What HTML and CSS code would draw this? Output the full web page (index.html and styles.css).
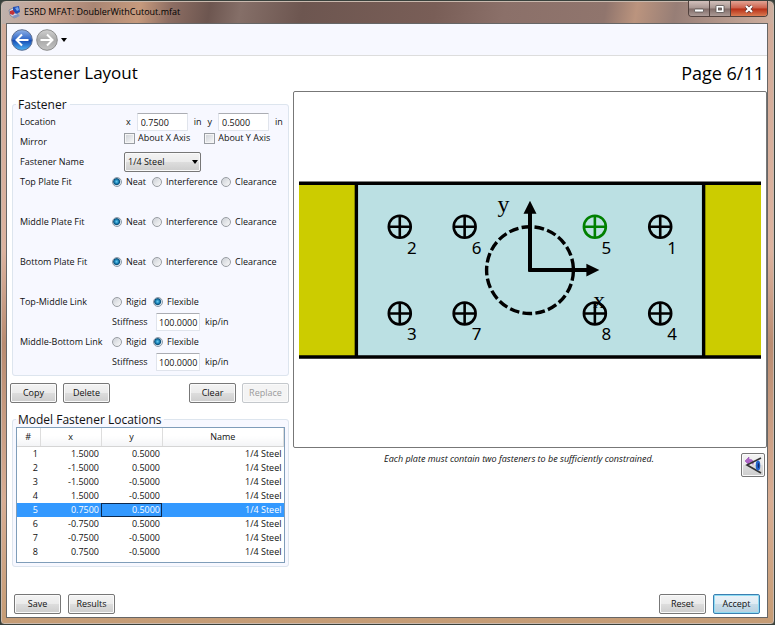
FILE: index.html
```html
<!DOCTYPE html>
<html lang="en">
<head>
<meta charset="utf-8">
<title>ESRD MFAT: DoublerWithCutout.mfat</title>
<link rel="stylesheet" href="styles.css">
</head>
<body>
<div class="window">
  <header class="titlebar">
    <svg class="app-icon" viewBox="0 0 13 13" aria-hidden="true">
      <path d="M1 4l4-2 4 2 1 6-4 2-4-3z" fill="#d9dde8" stroke="#66708a" stroke-width=".7"/>
      <path d="M5 1l6-1 1 6-4 2-3-3z" fill="#234eb4"/>
      <path d="M7 2l3-1 1 3-2 1z" fill="#72a5ee"/>
      <path d="M2 5l3-1 2 3-2 2-3-1z" fill="#c23338"/>
      <path d="M4 10l6-2 2 2-5 2z" fill="#8095c5"/>
    </svg>
    <span class="title">ESRD MFAT: DoublerWithCutout.mfat</span>
    <div class="caption-buttons">
      <button class="caption" aria-label="Minimize"><svg viewBox="0 0 12 10"><rect x="1.500" y="5" width="9" height="3" rx="1" fill="#fff" stroke="#55504f" stroke-width=".8"/></svg></button>
      <button class="caption" aria-label="Maximize"><svg viewBox="0 0 12 10"><rect x="2" y="1.500" width="8" height="7" rx=".5" fill="#fff" stroke="#55504f" stroke-width=".8"/><rect x="4.500" y="4" width="3" height="2" fill="#887370" stroke="#55504f" stroke-width=".8"/></svg></button>
      <button class="caption close" aria-label="Close"><svg viewBox="0 0 12 10"><path d="M3 2l6 6M9 2L3 8" stroke="#5b302c" stroke-width="3.600"/><path d="M3 2l6 6M9 2L3 8" stroke="#fff" stroke-width="2.200"/></svg></button>
    </div>
  </header>

  <div class="client">
    <nav class="toolbar" aria-label="Navigation">
      <button class="nav" aria-label="Back">
        <svg viewBox="0 0 22 22">
          <defs>
            <linearGradient id="blue" x2="0" y2="1"><stop offset="0" stop-color="#8fb1e6"/><stop offset=".48" stop-color="#2f66c8"/><stop offset=".52" stop-color="#164bb4"/><stop offset="1" stop-color="#4fb4f4"/></linearGradient>
            <linearGradient id="grey" x2="0" y2="1"><stop offset="0" stop-color="#d0d0d0"/><stop offset=".5" stop-color="#a9a9a9"/><stop offset="1" stop-color="#c4c4c4"/></linearGradient>
          </defs>
          <circle cx="11" cy="11" r="10.300" fill="url(#blue)" stroke="#5d6f93"/>
          <path d="M17.500 11H5.500M11 5.500L5.500 11l5.500 5.500" fill="none" stroke="#fff" stroke-width="2"/>
        </svg>
      </button>
      <button class="nav" aria-label="Forward">
        <svg viewBox="0 0 22 22">
          <circle cx="11" cy="11" r="10.300" fill="url(#grey)" stroke="#8d8d8d"/>
          <path d="M4.500 11h12M11 5.500l5.500 5.500-5.500 5.500" fill="none" stroke="#fff" stroke-width="2"/>
        </svg>
      </button>
      <button class="history" aria-label="Recent pages"><svg viewBox="0 0 6 4"><path d="M0 0h6L3 4z"/></svg></button>
    </nav>

    <div class="heading">
      <h1>Fastener Layout</h1>
      <span class="page">Page 6/11</span>
    </div>

    <main class="content">
      <section class="left">
        <fieldset class="group">
          <legend>Fastener</legend>
          <div class="row">
            <span class="name">Location</span>
            <div class="location">
              <label for="loc-x">x</label><input id="loc-x" class="text" value="0.7500"><span>in</span>
              <label for="loc-y">y</label><input id="loc-y" class="text" value="0.5000"><span>in</span>
            </div>
          </div>
          <div class="row">
            <span class="name">Mirror</span>
            <div class="mirror">
              <label><input type="checkbox">About X Axis</label>
              <label><input type="checkbox">About Y Axis</label>
            </div>
          </div>
          <div class="row">
            <label class="name" for="fastener">Fastener Name</label>
            <div class="picker">
              <select id="fastener"><option>1/4 Steel</option></select>
              <svg viewBox="0 0 6 4" aria-hidden="true"><path d="M0 0h6L3 4z"/></svg>
            </div>
          </div>
          <div class="row fit" role="radiogroup" aria-label="Top Plate Fit">
            <span class="name">Top Plate Fit</span>
            <label><input type="radio" name="top" checked>Neat</label>
            <label><input type="radio" name="top">Interference</label>
            <label><input type="radio" name="top">Clearance</label>
          </div>
          <div class="row fit" role="radiogroup" aria-label="Middle Plate Fit">
            <span class="name">Middle Plate Fit</span>
            <label><input type="radio" name="middle" checked>Neat</label>
            <label><input type="radio" name="middle">Interference</label>
            <label><input type="radio" name="middle">Clearance</label>
          </div>
          <div class="row fit" role="radiogroup" aria-label="Bottom Plate Fit">
            <span class="name">Bottom Plate Fit</span>
            <label><input type="radio" name="bottom" checked>Neat</label>
            <label><input type="radio" name="bottom">Interference</label>
            <label><input type="radio" name="bottom">Clearance</label>
          </div>
          <div class="row link" role="radiogroup" aria-label="Top-Middle Link">
            <span class="name">Top-Middle Link</span>
            <label><input type="radio" name="tm">Rigid</label>
            <label><input type="radio" name="tm" checked>Flexible</label>
          </div>
          <div class="row stiffness">
            <label for="tm-stiff">Stiffness</label><input id="tm-stiff" class="text" value="100.0000"><span>kip/in</span>
          </div>
          <div class="row link" role="radiogroup" aria-label="Middle-Bottom Link">
            <span class="name">Middle-Bottom Link</span>
            <label><input type="radio" name="mb">Rigid</label>
            <label><input type="radio" name="mb" checked>Flexible</label>
          </div>
          <div class="row stiffness">
            <label for="mb-stiff">Stiffness</label><input id="mb-stiff" class="text" value="100.0000"><span>kip/in</span>
          </div>
        </fieldset>

        <div class="actions">
          <button class="btn">Copy</button>
          <button class="btn">Delete</button>
          <button class="btn push">Clear</button>
          <button class="btn" disabled>Replace</button>
        </div>

        <fieldset class="group locations">
          <legend>Model Fastener Locations</legend>
          <div class="grid-box">
            <table>
              <colgroup><col class="c-num"><col class="c-coord"><col class="c-coord"><col></colgroup>
              <thead><tr><th>#</th><th>x</th><th>y</th><th>Name</th></tr></thead>
              <tbody>
                <tr><td>1</td><td>1.5000</td><td>0.5000</td><td>1/4 Steel</td></tr>
                <tr><td>2</td><td>-1.5000</td><td>0.5000</td><td>1/4 Steel</td></tr>
                <tr><td>3</td><td>-1.5000</td><td>-0.5000</td><td>1/4 Steel</td></tr>
                <tr><td>4</td><td>1.5000</td><td>-0.5000</td><td>1/4 Steel</td></tr>
                <tr class="selected"><td>5</td><td>0.7500</td><td class="current">0.5000</td><td>1/4 Steel</td></tr>
                <tr><td>6</td><td>-0.7500</td><td>0.5000</td><td>1/4 Steel</td></tr>
                <tr><td>7</td><td>-0.7500</td><td>-0.5000</td><td>1/4 Steel</td></tr>
                <tr><td>8</td><td>0.7500</td><td>-0.5000</td><td>1/4 Steel</td></tr>
              </tbody>
            </table>
          </div>
        </fieldset>
      </section>

      <section class="right">
        <div class="canvas">
          <svg viewBox="0 0 473 356" role="img" aria-label="Fastener layout diagram">
            <defs>
              <g id="bolt" fill="none" stroke-width="2.600"><circle r="11"/><path d="M-11 0H11M0-11V11"/></g>
            </defs>
            <rect x="5" y="91" width="463" height="175" fill="#cccc00"/>
            <rect x="63" y="91" width="347" height="175" fill="#bbe0e3"/>
            <path d="M5 91.500H468M5 265.500H468M62.500 91V266M410.500 91V266" stroke="#000" stroke-width="3.400"/>
            <circle cx="236.500" cy="178.500" r="43.500" fill="none" stroke="#000" stroke-width="3.400" stroke-dasharray="9.700 3.315" stroke-dashoffset="-1"/>
            <path d="M236.500 180V119M235 178.500H295" stroke="#000" stroke-width="4"/>
            <path d="M236.500 109l6.500 13h-13zM306 178.500l-13 6.500v-13z"/>
            <g class="axis"><text x="204" y="120">y</text><text x="300" y="216">x</text></g>
            <g stroke="#000">
              <use href="#bolt" x="106" y="135"/><use href="#bolt" x="171" y="135"/><use href="#bolt" x="367" y="135"/>
              <use href="#bolt" x="106" y="222"/><use href="#bolt" x="171" y="222"/><use href="#bolt" x="301.500" y="222"/><use href="#bolt" x="367" y="222"/>
              <use href="#bolt" x="301.500" y="135" stroke="#008000"/>
            </g>
            <g class="num">
              <text x="118" y="162">2</text><text x="183" y="162">6</text><text x="313" y="162">5</text><text x="379" y="162">1</text>
              <text x="118" y="249">3</text><text x="183" y="249">7</text><text x="313" y="249">8</text><text x="379" y="249">4</text>
            </g>
          </svg>
        </div>
        <div class="below">
          <p>Each plate must contain two fasteners to be sufficiently constrained.</p>
          <button class="btn view" aria-label="Reset view">
            <svg viewBox="0 0 18 18">
              <path d="M1 5l4-4v2.500c4-.5 5 2 4 5C8 6.500 7 6 5 6.500V9z" fill="#ae63c7" stroke="#8d43a8" stroke-width=".5"/>
              <path d="M17 2L3 9l14 8" fill="none" stroke="#333" stroke-width="1.600"/>
              <ellipse cx="14" cy="9.500" rx="2.300" ry="5" fill="#2464c9"/><ellipse cx="14.500" cy="9.500" rx=".8" ry="2.500" fill="#102a6c"/>
            </svg>
          </button>
        </div>
      </section>
    </main>

    <footer class="footer">
      <button class="btn">Save</button>
      <button class="btn">Results</button>
      <button class="btn push">Reset</button>
      <button class="btn default">Accept</button>
    </footer>
  </div>
</div>
</body>
</html>
```
FILE: styles.css
```css
* { box-sizing: border-box; }

body {
  margin: 0;
  background: #39413c;
  color: #111;
  font: 9px/14px "Open Sans", "Noto Sans", sans-serif;
}

button, input, select { font: inherit; color: inherit; margin: 0; }
button svg { display: block; }

.window {
  display: flex;
  flex-direction: column;
  min-height: 100vh;
  padding: 0 6px 6px 5px;
  border: 1px solid #39413c;
  border-radius: 6px 6px 4px 4px;
  background:
    linear-gradient(100deg, #bfb3ae 0, #c39d8b 7%, #a98674 12%, #c69a7d 18%, #8d6e63 22%, #6d5650 27%, #856f68 31%, #6d5650 39%, #795e57 56%, #8b7069 65%, #90756d 78%, #bb947e 82%, #977e76 87%, #cfaf9f 100%) 0 0 / 100% 23px no-repeat,
    linear-gradient(#d0aa98 0, #dcb39f 40%, #b98c71 55%, #d8ad93 80%, #c59c75 100%);
  box-shadow: inset 0 0 0 1px #c9b9ae;
}

.titlebar {
  display: flex;
  align-items: center;
  height: 22px;
  padding-left: 2px;
  gap: 3px;
}

.app-icon { width: 13px; height: 13px; }
.title { color: #000; }

.caption-buttons {
  display: flex;
  align-self: flex-start;
  margin-left: auto;
  border: 1px solid #51413d;
  border-top: 0;
  border-radius: 0 0 4px 4px;
  overflow: hidden;
}

.caption {
  display: grid;
  place-items: center;
  width: 21px;
  height: 15px;
  padding: 0;
  border: 0;
  border-right: 1px solid #51413d;
  background: linear-gradient(#d2c0bb, #a89691 48%, #806c68 52%, #ab9a96);
}

.caption svg { width: 12px; height: 10px; }
.caption.close { width: 36px; border: 0; background: linear-gradient(#e2a394, #cd604a 48%, #b82e16 52%, #d97a52); }

.client {
  display: flex;
  flex: 1;
  flex-direction: column;
  border: 1px solid #666;
  background: #fff;
}

.toolbar {
  display: flex;
  align-items: center;
  gap: 3px;
  height: 32px;
  padding-left: 4px;
  border-bottom: 1px solid #ddd;
  background: #f7f8ff;
}

.nav { width: 22px; height: 22px; padding: 0; border: 0; background: none; }
.history { padding: 0; border: 0; background: none; }
.history svg { width: 6px; height: 4px; }

.heading {
  display: flex;
  justify-content: space-between;
  height: 35px;
  padding: 5px 3px 0 4px;
  color: #000;
  font-size: 17px;
  line-height: 24px;
}

.heading h1 { margin: 0; font: inherit; }
.page { font-size: 18px; }

.content { display: flex; flex: 1; gap: 4px; }
.left { flex: 0 0 282px; padding: 6px 0 0 5px; }

.group {
  min-width: 0;
  margin: 0;
  padding: 0 4px 3px 7px;
  border: 1px solid #dde5ee;
  border-radius: 3px;
  background: #f7f8ff;
}

.group legend {
  margin-left: -4px;
  padding: 0 3px 0 2px;
  color: #111;
  font-size: 12px;
  line-height: 15px;
}

.row { display: flex; height: 20px; align-items: center; white-space: nowrap; }
.name { flex: 0 0 92px; }
.row.fit { height: 40px; align-items: flex-start; }
.row label, .row.fit .name { line-height: 20px; }
.fit label, .link label, .mirror label { display: flex; align-items: center; }
.fit label { gap: 4px; flex: 0 0 40px; }
.fit label:nth-of-type(2) { flex-basis: 69px; }
.link label { gap: 4px; flex: 0 0 41px; }

.location { display: flex; flex: 1; align-items: center; gap: 6px; padding-left: 14px; }
.mirror { display: flex; gap: 14px; padding-left: 12px; align-self: flex-start; }
.mirror .mirror label, .mirror label { gap: 3px; line-height: 12px; }

.text {
  height: 18px;
  width: 51px;
  padding: 0 3px;
  border: 1px solid #e0e4ec;
  border-top-color: #abadb3;
  border-radius: 1px;
  background: #fff;
}

.stiffness { padding-left: 92px; }
.stiffness label { flex: 0 0 44px; }
.stiffness .text { width: 44px; padding: 0 0 0 2px; margin-right: 5px; }

input[type="radio"], input[type="checkbox"] {
  appearance: none;
  flex: none;
  width: 10px;
  height: 10px;
  border: 1px solid #999da3;
  background: linear-gradient(135deg, #ccd0d6, #fafafa);
}

input[type="checkbox"] { width: 11px; height: 11px; box-shadow: inset 0 0 0 1px #f5f5f5; }
input[type="radio"] { border-radius: 50%; }
input[type="radio"]:checked {
  border-color: #8e9aa6;
  background: radial-gradient(circle at 45% 45%, #69cdf0 0, #1780b5 2px, #0b4f78 3px, #dce6ef 4px);
}

.picker { display: grid; align-items: center; margin-left: 12px; }
.picker > * { grid-area: 1 / 1; }
.picker svg { width: 6px; height: 4px; justify-self: end; margin-right: 3px; pointer-events: none; }

select, .btn {
  border: 1px solid #777;
  border-radius: 2px;
  background: linear-gradient(#f3f3f3, #ebebeb 49%, #ddd 51%, #cdcdcd);
  box-shadow: inset 0 0 0 1px #fafafa;
}

select { appearance: none; width: 77px; height: 20px; padding: 0 3px; }

.btn { width: 47px; height: 20px; padding: 0; color: #111; }
.btn:disabled { border-color: #c4c8cc; background: #f4f4f4; color: #9a9a9a; }
.btn.default { border-color: #3c7fb1; background: linear-gradient(#eaf2f8, #dfebf3 49%, #c9dde9 51%, #b8d0df); box-shadow: inset 0 0 0 1px #8edcf3; }
.push { margin-left: auto; }

.actions { display: flex; gap: 6px; margin: 7px 0 9px -2px; }

.locations { padding: 0 3px 3px; }
.locations legend { margin-left: 0; }
.grid-box { height: 136px; border: 1px solid #7f9db9; background: #fff; }

table { width: 100%; border-collapse: collapse; table-layout: fixed; }
.c-num { width: 23px; }
.c-coord { width: 61px; }
th { height: 18px; padding: 0; border-right: 1px solid #ddd; border-bottom: 1px solid #d5d5d5; background: linear-gradient(#fff 45%, #f3f4f6); font-weight: 400; }
td { height: 14px; padding: 0 2px; line-height: 14px; text-align: right; }
.selected { background: #3399ff; color: #fff; }
.current { outline: 1px solid #0d2a4f; outline-offset: -1px; }

.right { flex: 1; min-width: 0; }
.canvas { border: 1px solid #777; border-radius: 2px; background: #fff; }
.canvas svg { display: block; width: 100%; }
.axis { font: 24px "Liberation Serif", serif; }
.num { font: 17px "Noto Sans", sans-serif; text-anchor: middle; }

.below { display: flex; align-items: flex-start; padding: 5px 2px 0 0; }
.below p { flex: 1; margin: 0; padding-left: 4px; text-align: center; font-style: italic; line-height: 12px; }
.btn.view { display: grid; place-items: center; width: 24px; height: 24px; }
.view svg { width: 18px; height: 18px; }

.footer { display: flex; gap: 7px; padding: 0 7px 3px; }
```
